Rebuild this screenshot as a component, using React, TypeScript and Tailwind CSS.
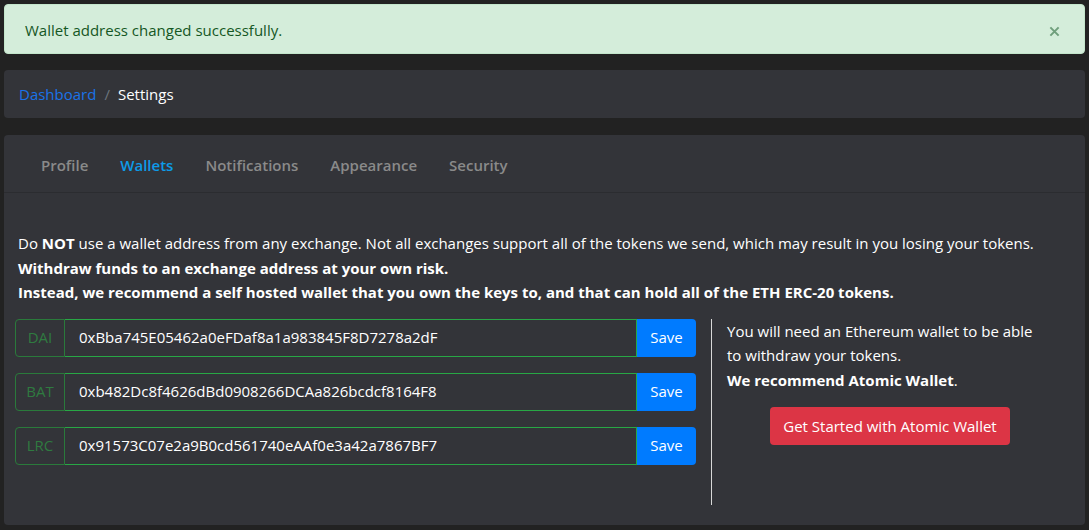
import React from "react";

const font = { fontFamily: '"Open Sans", "Noto Sans", sans-serif' };

const wallets = [
  { sym: "DAI", addr: "0xBba745E05462a0eFDaf8a1a983845F8D7278a2dF" },
  { sym: "BAT", addr: "0xb482Dc8f4626dBd0908266DCAa826bcdcf8164F8" },
  { sym: "LRC", addr: "0x91573C07e2a9B0cd561740eAAf0e3a42a7867BF7" },
];

export default function App() {
  return (
    <div className="min-h-[530px] w-full bg-[#222222] px-[4px] pt-[4px] pb-[4px] text-[15px]" style={font}>
      <div className="flex h-[50px] items-center justify-between rounded-[4px] border border-[#c3e6cb] bg-[#d4edda] pl-[20px] pr-[24px] text-[#155724]">
        <span className="mt-[2px]">Wallet address changed successfully.</span>
        <svg width="11" height="11" viewBox="0 0 12 12" className="mt-[4px]">
          <path d="M1.5 1.5 L10.5 10.5 M10.5 1.5 L1.5 10.5" stroke="#6f9f7c" strokeWidth="2.2" />
        </svg>
      </div>

      <div className="mt-[16px] flex h-[48px] items-center rounded-[4px] bg-[#333439] px-[15px]">
        <span className="text-[#1a73e8]">Dashboard</span>
        <span className="px-[8px] text-[#6c757d]">/</span>
        <span className="text-white">Settings</span>
      </div>

      <div className="mt-[17px] rounded-[4px] bg-[#333439]">
        <div className="flex h-[58px] items-center gap-[32px] border-b border-[#2b2c30] px-[37px] pt-[3px] font-semibold text-[#8a8a8a]">
          <span>Profile</span>
          <span className="text-[#0d9be8]">Wallets</span>
          <span>Notifications</span>
          <span>Appearance</span>
          <span>Security</span>
        </div>
        <div className="px-[11px] pt-[38px] pb-[20px]">
          <div className="px-[3px] leading-[24.5px] text-white">
            <p>
              Do <b>NOT</b> use a wallet address from any exchange. Not all exchanges support all of the tokens we send, which may result in you losing your tokens.
            </p>
            <p className="font-bold">Withdraw funds to an exchange address at your own risk.</p>
            <p className="font-bold">Instead, we recommend a self hosted wallet that you own the keys to, and that can hold all of the ETH ERC-20 tokens.</p>
          </div>
          <div className="mt-[14px] flex">
            <div className="flex w-[681px] flex-col gap-[16px]">
              {wallets.map((w) => (
                <div key={w.sym} className="flex h-[38px]">
                  <div className="flex w-[50px] items-center justify-center rounded-l-[4px] border border-[#2a7a3b] text-[#2f7a40]">
                    {w.sym}
                  </div>
                  <div className="flex flex-1 items-center border-y border-r border-[#28a745] px-[14px] text-white">
                    {w.addr}
                  </div>
                  <div className="flex w-[59px] items-center justify-center rounded-r-[4px] bg-[#007bff] text-white">Save</div>
                </div>
              ))}
            </div>
            <div className="ml-[15px] flex h-[186px] w-[357px] flex-col border-l border-[#d8d8d8] px-[15px] text-white">
              <p className="pr-[12px] leading-[24.5px]">
                You will need an Ethereum wallet to be able to withdraw your tokens.
              </p>
              <p className="leading-[24.5px]">
                <b>We recommend Atomic Wallet</b>.
              </p>
              <div className="mt-[15px] flex justify-center">
                <div className="flex h-[38px] items-center rounded-[4px] bg-[#dc3545] px-[13px] text-white">
                  Get Started with Atomic Wallet
                </div>
              </div>
            </div>
          </div>
        </div>
      </div>
    </div>
  );
}
